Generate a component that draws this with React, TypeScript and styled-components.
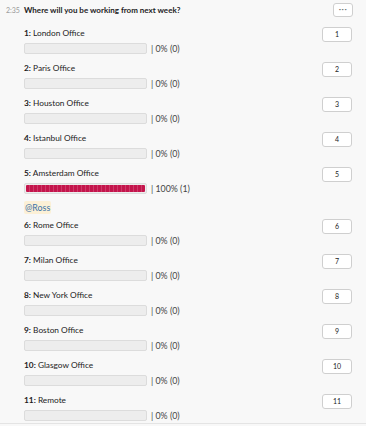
import React from 'react';
import styled, { createGlobalStyle } from 'styled-components';

const GlobalStyle = createGlobalStyle`
  html, body {
    margin: 0;
    padding: 0;
    background: #f8f8f8;
    font-family: Lato, "Liberation Sans", sans-serif;
    color: #1d1c1d;
  }
`;

const Container = styled.div`
  width: 366px;
  height: 424px;
  box-sizing: border-box;
  border-bottom: 1px solid #e4e4e4;
  background: #f8f8f8;
  overflow: hidden;
`;

const Header = styled.div`
  display: flex;
  align-items: center;
  height: 20px;
  padding: 0 13px 0 6px;
`;

const Time = styled.span`
  width: 18px;
  font-size: 7px;
  color: #9a9a9a;
`;

const Title = styled.span`
  flex: 1;
  font-size: 8px;
  font-weight: 700;
`;

const Button = styled.button<{ $small?: boolean }>`
  box-sizing: border-box;
  width: ${({ $small }): string => ($small ? '20px' : '30px')};
  height: ${({ $small }): string => ($small ? '14px' : '15px')};
  margin-top: ${({ $small }): string => ($small ? '0' : '3px')};
  padding: 0;
  border: 1px solid #cfcfcf;
  border-radius: 3px;
  background: #fff;
  font-family: Lato, "Liberation Sans", sans-serif;
  font-size: ${({ $small }): string => ($small ? '4px' : '7px')};
  letter-spacing: ${({ $small }): string => ($small ? '0.5px' : '0')};
  line-height: 1;
  color: ${({ $small }): string => ($small ? '#777' : '#1d1c1d')};
  display: flex;
  align-items: center;
  justify-content: center;
`;

const List = styled.div`
  padding: 4px 14px 0 24px;
`;

const Option = styled.div``;

const LabelRow = styled.div`
  display: flex;
  align-items: center;
  justify-content: space-between;
  height: 17px;
  font-size: 8.3px;
`;

const Label = styled.span`
  b {
    font-weight: 700;
  }
`;

const BarRow = styled.div`
  display: flex;
  align-items: flex-start;
  height: 18px;
  padding-top: 2px;
  box-sizing: border-box;
  font-size: 8.8px;
  line-height: 11px;
  color: #444;
`;

const Bar = styled.div`
  box-sizing: border-box;
  width: 123px;
  height: 11px;
  border: 1px solid #dcdcdc;
  border-radius: 2px;
  background: #ededed;
  padding: 1px;
  margin-right: 4px;
`;

const Fill = styled.div`
  height: 100%;
  border-radius: 1px;
  background:
    repeating-linear-gradient(90deg, transparent 0 3px, rgba(255, 255, 255, 0.16) 3px 4px),
    #c4154c;
`;

const Voters = styled.div`
  height: 18px;
  display: flex;
  align-items: center;
  margin-top: -1px;
`;

const Mention = styled.span`
  background: #fcf0d6;
  color: #3b73a8;
  font-size: 8.8px;
  line-height: 13px;
  padding: 0 1px;
  border-radius: 2px;
`;

interface PollOption {
  name: string;
  percent: number;
  votes: number;
  voters?: string[];
}

const options: PollOption[] = [
  { name: 'London Office', percent: 0, votes: 0 },
  { name: 'Paris Office', percent: 0, votes: 0 },
  { name: 'Houston Office', percent: 0, votes: 0 },
  { name: 'Istanbul Office', percent: 0, votes: 0 },
  { name: 'Amsterdam Office', percent: 100, votes: 1, voters: ['@Ross'] },
  { name: 'Rome Office', percent: 0, votes: 0 },
  { name: 'Milan Office', percent: 0, votes: 0 },
  { name: 'New York Office', percent: 0, votes: 0 },
  { name: 'Boston Office', percent: 0, votes: 0 },
  { name: 'Glasgow Office', percent: 0, votes: 0 },
  { name: 'Remote', percent: 0, votes: 0 },
];

const App: React.FC = () => {
  return (
    <Container>
      <GlobalStyle />
      <Header>
        <Time>2:35</Time>
        <Title>Where will you be working from next week?</Title>
        <Button $small>•••</Button>
      </Header>
      <List>
        {options.map((option, index) => (
          <Option key={index}>
            <LabelRow>
              <Label><b>{index + 1}:</b> {option.name}</Label>
              <Button>{index + 1}</Button>
            </LabelRow>
            <BarRow>
              <Bar>
                {option.percent > 0 && <Fill style={{ width: `${option.percent}%` }} />}
              </Bar>
              | {option.percent}% ({option.votes})
            </BarRow>
            {option.voters && (
              <Voters>
                {option.voters.map((voter) => <Mention key={voter}>{voter}</Mention>)}
              </Voters>
            )}
          </Option>
        ))}
      </List>
    </Container>
  );
};

export default App;
